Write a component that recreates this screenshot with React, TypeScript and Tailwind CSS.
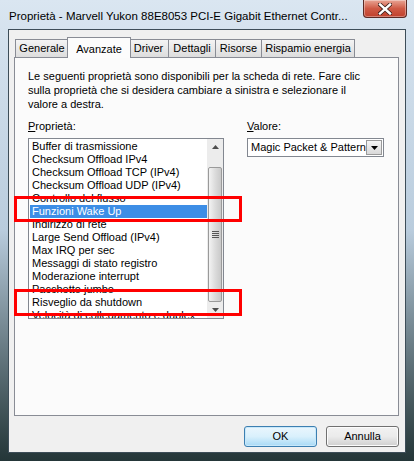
import React from "react";

const items = [
  "Buffer di trasmissione",
  "Checksum Offload IPv4",
  "Checksum Offload TCP (IPv4)",
  "Checksum Offload UDP (IPv4)",
  "Controllo del flusso",
  "Funzioni Wake Up",
  "Indirizzo di rete",
  "Large Send Offload (IPv4)",
  "Max IRQ per sec",
  "Messaggi di stato registro",
  "Moderazione interrupt",
  "Pacchetto jumbo",
  "Risveglio da shutdown",
  "Velocità di collegamento e duplex",
];

const tabs = ["Generale", "Avanzate", "Driver", "Dettagli", "Risorse", "Rispamio energia"];
const tabWidths: Record<string, string> = {
  Generale: "w-[54px]",
  Avanzate: "w-[64px]",
  Driver: "w-[41px]",
  Dettagli: "w-[48px]",
  Risorse: "w-[47px]",
  "Rispamio energia": "w-[94px]",
};

function Tab({ label, active }: { label: string; active: boolean }) {
  if (active) {
    return (
      <div
        className={`relative z-10 -mx-[2px] -mb-px flex h-[21px] items-start justify-center border border-b-0 border-[#898c95] bg-[#fcfcfc] pt-[3px] whitespace-nowrap ${tabWidths[label]}`}
      >
        <span>{label}</span>
      </div>
    );
  }
  return (
    <div
      className={`-ml-px flex h-[18px] items-center justify-center border border-b-0 border-[#898c95] bg-gradient-to-b from-[#f4f4f4] to-[#dddddd] whitespace-nowrap first:ml-0 ${tabWidths[label]}`}
    >
      <span>{label}</span>
    </div>
  );
}

export default function App() {
  return (
    <div
      className="relative flex h-[461px] w-[414px] flex-col overflow-hidden bg-gradient-to-b from-[#dae6f1] via-[#b9ccdd] to-[#243638] px-[8px] pb-[8px] text-[11px] text-black"
      style={{ fontFamily: '"Liberation Sans", Arial, sans-serif' }}
    >
      {/* Title bar */}
      <div className="flex h-[29px] items-start justify-between gap-[4px]">
        <div className="min-w-0 overflow-hidden pt-[8px] pl-px text-[11.5px] whitespace-nowrap">
          Proprietà - Marvell Yukon 88E8053 PCI-E Gigabit Ethernet Contr...
        </div>
        <div className="-mr-px flex h-[18px] w-[44px] shrink-0 items-center justify-center rounded-b-[4px] border border-t-0 border-[#5b2a24] bg-gradient-to-b from-[#e8a595] via-[#cf5a45] to-[#c0402c] shadow-[inset_0_0_0_1px_rgba(255,255,255,0.35)]">
          <svg width="14" height="12" viewBox="0 0 14 12">
            <path d="M2 1.5 L12 10.5 M12 1.5 L2 10.5" stroke="#3a1d18" strokeWidth="4" strokeLinecap="square" />
            <path d="M2 1.5 L12 10.5 M12 1.5 L2 10.5" stroke="#ffffff" strokeWidth="2.4" strokeLinecap="square" />
          </svg>
        </div>
      </div>

      {/* Client area */}
      <div className="flex flex-1 flex-col border border-[#3d4d58] bg-[#f0f0f0] pl-[5px] pt-[7px]">
        {/* Tabs */}
        <div className="flex h-[20px] items-end pl-px">
          {tabs.map((t) => (
            <Tab key={t} label={t} active={t === "Avanzate"} />
          ))}
        </div>

        {/* Panel */}
        <div className="flex h-[359px] w-[385px] flex-col border border-[#898c95] bg-[#fbfbfb] pl-[13px] pt-[11px]">
          <p className="leading-[14px] whitespace-nowrap">
            Le seguenti proprietà sono disponibili per la scheda di rete. Fare clic
            <br />
            sulla proprietà che si desidera cambiare a sinistra e selezionare il
            <br />
            valore a destra.
          </p>

          <div className="mt-[8px] flex gap-[23px]">
            <div className="flex flex-col">
              <div className="h-[14px] leading-[14px]">
                <span className="underline">P</span>roprietà:
              </div>
              <div className="mt-[5px] flex h-[181px] w-[196px] border border-[#828790] bg-white">
                <div className="flex-1 overflow-hidden pl-px pt-px">
                  {items.map((it) => (
                    <div
                      key={it}
                      className={`h-[13px] whitespace-nowrap pl-[2px] leading-[13px] ${
                        it === "Funzioni Wake Up" ? "bg-[#3d8ee6] text-white" : ""
                      }`}
                    >
                      {it}
                    </div>
                  ))}
                </div>
                {/* Scrollbar */}
                <div className="flex w-[16px] flex-col bg-[#ececec]">
                  <div className="flex h-[16px] items-center justify-center">
                    <svg width="7" height="4" viewBox="0 0 7 4">
                      <path d="M0 4 L3.5 0 L7 4 Z" fill="#4d4d4d" />
                    </svg>
                  </div>
                  <div className="h-[12px]" />
                  <div className="mx-px flex h-[135px] items-center justify-center rounded-[2px] border border-[#9a9a9a] bg-gradient-to-r from-[#f3f3f3] via-[#dcdcdc] to-[#c9c9c9]">
                    <div className="flex flex-col gap-[1px]">
                      <div className="h-px w-[7px] bg-[#555]" />
                      <div className="h-px w-[7px] bg-[#555]" />
                      <div className="h-px w-[7px] bg-[#555]" />
                      <div className="h-px w-[7px] bg-[#555]" />
                    </div>
                  </div>
                  <div className="flex flex-1 items-center justify-center">
                    <svg width="7" height="4" viewBox="0 0 7 4">
                      <path d="M0 0 L7 0 L3.5 4 Z" fill="#4d4d4d" />
                    </svg>
                  </div>
                </div>
              </div>
            </div>

            <div className="flex flex-col">
              <div className="h-[14px] leading-[14px]">
                <span className="underline">V</span>alore:
              </div>
              <div className="mt-[5px] flex h-[19px] w-[137px] items-center border border-[#828790] bg-white p-px">
                <div className="flex-1 pl-[2px] whitespace-nowrap">Magic Packet &amp; Pattern</div>
                <div className="flex h-[15px] w-[16px] items-center justify-center border border-[#9a9a9a] bg-gradient-to-b from-[#f6f6f6] to-[#d9d9d9]">
                  <svg width="7" height="4" viewBox="0 0 7 4">
                    <path d="M0 0 L7 0 L3.5 4 Z" fill="#000" />
                  </svg>
                </div>
              </div>
            </div>
          </div>
        </div>

        {/* Buttons */}
        <div className="mt-[10px] flex justify-end gap-[9px] pr-[6px]">
          <button className="h-[21px] w-[73px] rounded-[3px] border border-[#3c7fb1] bg-gradient-to-b from-[#eaf6fd] via-[#d9f0fc] to-[#a7d9f5] shadow-[inset_0_0_0_1px_#c8e8fa]">
            OK
          </button>
          <button className="h-[21px] w-[73px] rounded-[3px] border border-[#707070] bg-gradient-to-b from-[#f2f2f2] via-[#ebebeb] to-[#cfcfcf] shadow-[inset_0_0_0_1px_#fcfcfc]">
            Annulla
          </button>
        </div>
      </div>

      {/* Annotation boxes */}
      <div className="pointer-events-none absolute left-[14px] top-[196px] h-[26px] w-[228px] border-[3px] border-[#ff0000]" />
      <div className="pointer-events-none absolute left-[14px] top-[289px] h-[27px] w-[228px] border-[3px] border-[#ff0000]" />
    </div>
  );
}
